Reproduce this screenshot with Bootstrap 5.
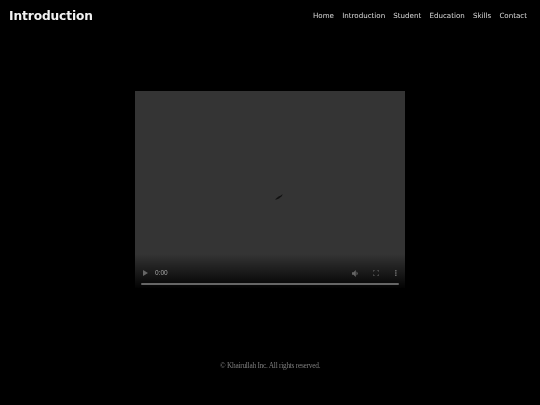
<!DOCTYPE html>
<html lang="en">
<head>
<meta charset="utf-8">
<title>Introduction</title>
<link href="https://cdn.jsdelivr.net/npm/bootstrap@5.3.0/dist/css/bootstrap.min.css" rel="stylesheet">
<style>
html,body{background:#000;height:405px;overflow:hidden}
body{font-family:"DejaVu Sans","Liberation Sans",sans-serif;color:#fff}
.top-bar{height:32px;padding:0 13px 0 9px;will-change:transform}
.site-title{font-size:12.2px;font-weight:700;letter-spacing:-.1px;color:#f2f2f2;line-height:32px}
.top-links{gap:8.2px}
.top-links a{font-size:7.1px;color:#dcdcdc;text-decoration:none;line-height:32px}
.stage{padding-top:59px}
.player{width:270px;height:197px;background:#343434}
.spin-mark{left:139px;top:102px}
.player-shade{height:34px;background:linear-gradient(to bottom,rgba(0,0,0,0),rgba(0,0,0,.95));padding:0 6px 3px}
.ctl-row{height:20px;font-size:6.5px;padding:0 2px}
.time-txt{margin-left:7px;color:#a8a8a8;font-family:"Liberation Sans",sans-serif;will-change:transform}
.speaker-ico{margin-right:14px}
.screen-ico{margin-right:16px}
.track{height:2px;background:#666;border-radius:1px}
.legal{font-family:"Liberation Serif",serif;font-size:7.4px;letter-spacing:-.27px;color:#7d7d7d;padding-top:72px;will-change:transform}
</style>
</head>
<body>
<nav class="top-bar d-flex justify-content-between align-items-center">
  <a class="site-title text-decoration-none" href="#">Introduction</a>
  <div class="top-links d-flex">
    <a href="#">Home</a><a href="#">Introduction</a><a href="#">Student</a><a href="#">Education</a><a href="#">Skills</a><a href="#">Contact</a>
  </div>
</nav>
<main class="stage d-flex flex-column align-items-center">
  <div class="player d-flex flex-column justify-content-end position-relative">
    <svg class="spin-mark position-absolute" width="10" height="8" viewBox="0 0 10 8"><path d="M1 6.5 4.5 3.5 7 2.5 8.5 1 8 3 5 5.5 2.5 6.5Z" fill="#111"/></svg>
    <div class="player-shade d-flex flex-column justify-content-end">
      <div class="ctl-row d-flex align-items-center">
        <svg width="5" height="6" viewBox="0 0 5 6"><path d="M0 0 5 3 0 6Z" fill="#666"/></svg>
        <span class="time-txt">0:00</span>
        <svg class="speaker-ico ms-auto" width="7" height="7" viewBox="0 0 7 7"><path d="M0 2.2H1.5L3.8 0V7L1.5 4.8H0Z M4.5 1.5C6.2 2.5 6.2 4.5 4.5 5.5Z" fill="#666"/></svg>
        <svg class="screen-ico" width="6" height="6" viewBox="0 0 6 6"><path d="M0 2V0H2M4 0H6V2M6 4V6H4M2 6H0V4" fill="none" stroke="#5a5a5a" stroke-width="1"/></svg>
        <svg width="2" height="6" viewBox="0 0 2 6"><path d="M0 0H1.6V1.5H0ZM0 2.2H1.6V3.7H0ZM0 4.4H1.6V5.9H0Z" fill="#666"/></svg>
      </div>
      <div class="track"></div>
    </div>
  </div>
  <p class="legal mb-0">© Khairullah Inc. All rights reserved.</p>
</main>
<script src="https://cdn.jsdelivr.net/npm/bootstrap@5.3.0/dist/js/bootstrap.bundle.min.js"></script>
</body>
</html>
